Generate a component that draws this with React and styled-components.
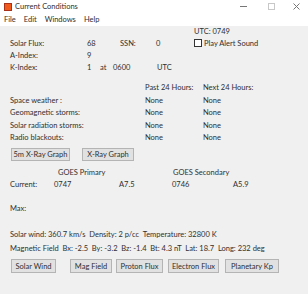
import React from "react";
import styled, { createGlobalStyle } from "styled-components";

const Global = createGlobalStyle`
  html, body { margin: 0; padding: 0; background: #f0f0f0; }
  body { font-family: Lato, "Noto Sans", sans-serif; font-size: 7.5px; color: #2f2f2f; }
  * { box-sizing: border-box; }
`;

const Window = styled.div`
  width: 308px;
  height: 294px;
  background: #f0f0f0;
  display: flex;
  flex-direction: column;
  overflow: hidden;
`;

const TitleBar = styled.div`
  height: 13px;
  background: #fff;
  display: flex;
  align-items: center;
  padding-left: 4px;
`;

const AppIcon = styled.span`
  width: 8px;
  height: 8px;
  background: #f05a1c;
  border: 1px solid #a8321a;
  margin-right: 3px;
`;

const Title = styled.span`
  flex: 1;
  line-height: 13px;
  font-size: 7.5px;
`;

const Controls = styled.div`
  display: grid;
  grid-template-columns: 29px 27px 23px;
  height: 13px;
  align-items: center;
`;

const Ctl = styled.span`
  display: flex;
  justify-content: center;
  align-items: center;
`;

const MenuBar = styled.div`
  height: 13px;
  background: #fff;
  display: flex;
  align-items: center;
  gap: 8px;
  padding-left: 4px;
  font-size: 7.5px;
`;

const Content = styled.div`
  padding-left: 10px;
  display: flex;
  flex-direction: column;
`;

const Row = styled.div`
  display: grid;
  grid-template-columns: ${(p) => p.$cols || "auto"};
  height: ${(p) => p.$h || 12}px;
  margin-top: ${(p) => p.$mt || 0}px;
  align-items: center;
  white-space: pre;
`;

const Check = styled.label`
  display: flex;
  align-items: center;
  gap: 2px;
`;

const Box = styled.span`
  width: 8px;
  height: 8px;
  background: #fff;
  border: 1px solid #333;
`;

const Buttons = styled.div`
  display: flex;
  height: ${(p) => p.$h}px;
  margin-top: ${(p) => p.$mt}px;
  margin-left: 1px;
`;

const Btn = styled.div`
  width: ${(p) => p.$w}px;
  margin-right: ${(p) => p.$gap || 0}px;
  background: #e1e1e1;
  border: 1px solid #b4b4b4;
  display: flex;
  align-items: center;
  justify-content: center;
  white-space: pre;
`;

export default function App() {
  return (
    <Window>
      <Global />
      <TitleBar>
        <AppIcon />
        <Title>Current Conditions</Title>
        <Controls>
          <Ctl>
            <svg width="7" height="1"><rect width="7" height="1" fill="#777" /></svg>
          </Ctl>
          <Ctl>
            <svg width="7" height="7"><rect x="0.5" y="0.5" width="6" height="6" fill="none" stroke="#c8c8c8" /></svg>
          </Ctl>
          <Ctl>
            <svg width="7" height="7"><path d="M0.5 0.5L6.5 6.5M6.5 0.5L0.5 6.5" stroke="#777" /></svg>
          </Ctl>
        </Controls>
      </TitleBar>
      <MenuBar>
        <span>File</span>
        <span>Edit</span>
        <span>Windows</span>
        <span>Help</span>
      </MenuBar>
      <Content>
        <Row $cols="184px auto" $h={11}>
          <span />
          <span>UTC: 0749</span>
        </Row>
        <Row $cols="77px 33px 36px 38px auto">
          <span>Solar Flux:</span>
          <span>68</span>
          <span>SSN:</span>
          <span>0</span>
          <Check>
            <Box />
            <span>Play Alert Sound</span>
          </Check>
        </Row>
        <Row $cols="77px auto">
          <span>A-Index:</span>
          <span>9</span>
        </Row>
        <Row $cols="77px 13px 13px 44px auto">
          <span>K-Index:</span>
          <span>1</span>
          <span>at</span>
          <span>0600</span>
          <span>UTC</span>
        </Row>
        <Row $cols="135px 58px auto" $mt={8}>
          <span />
          <span>Past 24 Hours:</span>
          <span>Next 24 Hours:</span>
        </Row>
        <Row $cols="135px 58px auto" $h={12.5} $mt={1}>
          <span>Space weather :</span>
          <span>None</span>
          <span>None</span>
        </Row>
        <Row $cols="135px 58px auto" $h={12.5}>
          <span>Geomagnetic storms:</span>
          <span>None</span>
          <span>None</span>
        </Row>
        <Row $cols="135px 58px auto" $h={12.5}>
          <span>Solar radiation storms:</span>
          <span>None</span>
          <span>None</span>
        </Row>
        <Row $cols="135px 58px auto" $h={12.5}>
          <span>Radio blackouts:</span>
          <span>None</span>
          <span>None</span>
        </Row>
        <Buttons $h={13} $mt={4}>
          <Btn $w={59} $gap={12}>5m X-Ray Graph</Btn>
          <Btn $w={52}>X-Ray Graph</Btn>
        </Buttons>
        <Row $cols="48px 115px auto" $mt={5}>
          <span />
          <span>GOES Primary</span>
          <span>GOES Secondary</span>
        </Row>
        <Row $cols="44px 65px 53px 61px auto">
          <span>Current:</span>
          <span>0747</span>
          <span>A7.5</span>
          <span>0746</span>
          <span>A5.9</span>
        </Row>
        <Row $mt={12}>
          <span>Max:</span>
        </Row>
        <Row $mt={14}>
          <span>Solar wind: 360.7 km/s  Density: 2 p/cc  Temperature: 32800 K</span>
        </Row>
        <Row $mt={2}>
          <span>Magnetic Field  Bx: -2.5  By: -3.2  Bz: -1.4  Bt: 4.3 nT  Lat: 18.7  Long: 232 deg</span>
        </Row>
        <Buttons $h={14} $mt={5}>
          <Btn $w={45} $gap={14}>Solar Wind</Btn>
          <Btn $w={42} $gap={4}>Mag Field</Btn>
          <Btn $w={47} $gap={5}>Proton Flux</Btn>
          <Btn $w={51} $gap={6}>Electron Flux</Btn>
          <Btn $w={54}>Planetary Kp</Btn>
        </Buttons>
      </Content>
    </Window>
  );
}
